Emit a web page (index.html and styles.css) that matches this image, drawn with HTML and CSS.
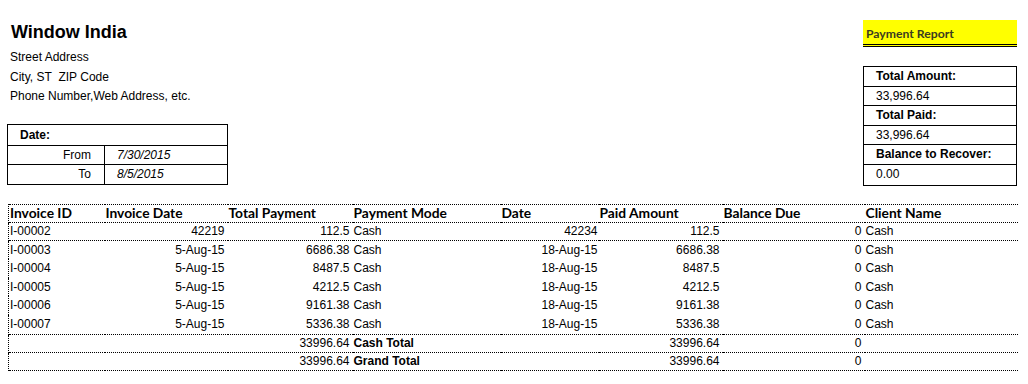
FILE: index.html
```html
<!DOCTYPE html>
<html>
<head>
<meta charset="utf-8">
<title>Payment Report</title>
<link rel="stylesheet" href="styles.css">
</head>
<body>
<div class="page">
  <div class="top">
    <div class="left">
      <div class="company">
        <div class="title">Window India</div>
        <div class="addr">Street Address</div>
        <div class="addr">City, ST&nbsp; ZIP Code</div>
        <div class="addr">Phone Number,Web Address, etc.</div>
      </div>
      <div class="datebox">
        <div class="date-head">Date:</div>
        <div class="date-row"><span class="dl">From</span><span class="dv">7/30/2015</span></div>
        <div class="date-row last"><span class="dl">To</span><span class="dv">8/5/2015</span></div>
      </div>
    </div>
    <div class="right">
      <div class="report-title">Payment Report</div>
      <div class="totals">
        <div class="t-row lbl">Total Amount:</div>
        <div class="t-row">33,996.64</div>
        <div class="t-row lbl">Total Paid:</div>
        <div class="t-row">33,996.64</div>
        <div class="t-row lbl">Balance to Recover:</div>
        <div class="t-row last">0.00</div>
      </div>
    </div>
  </div>

  <table class="report">
    <colgroup>
      <col class="c1"><col class="c2"><col class="c3"><col class="c4">
      <col class="c5"><col class="c6"><col class="c7"><col class="c8">
    </colgroup>
    <thead>
      <tr class="head lined">
        <th>Invoice ID</th><th>Invoice Date</th><th>Total Payment</th><th>Payment Mode</th>
        <th>Date</th><th>Paid Amount</th><th>Balance Due</th><th>Client Name</th>
      </tr>
    </thead>
    <tbody>
      <tr class="lined">
        <td>I-00002</td><td class="r">42219</td><td class="r">112.5</td><td>Cash</td>
        <td class="r d">42234</td><td class="r">112.5</td><td class="r">0</td><td>Cash</td>
      </tr>
      <tr class="mid">
        <td>I-00003</td><td class="r">5-Aug-15</td><td class="r">6686.38</td><td>Cash</td>
        <td class="r d">18-Aug-15</td><td class="r">6686.38</td><td class="r">0</td><td>Cash</td>
      </tr>
      <tr class="mid">
        <td>I-00004</td><td class="r">5-Aug-15</td><td class="r">8487.5</td><td>Cash</td>
        <td class="r d">18-Aug-15</td><td class="r">8487.5</td><td class="r">0</td><td>Cash</td>
      </tr>
      <tr class="mid">
        <td>I-00005</td><td class="r">5-Aug-15</td><td class="r">4212.5</td><td>Cash</td>
        <td class="r d">18-Aug-15</td><td class="r">4212.5</td><td class="r">0</td><td>Cash</td>
      </tr>
      <tr class="mid">
        <td>I-00006</td><td class="r">5-Aug-15</td><td class="r">9161.38</td><td>Cash</td>
        <td class="r d">18-Aug-15</td><td class="r">9161.38</td><td class="r">0</td><td>Cash</td>
      </tr>
      <tr class="mid lined">
        <td>I-00007</td><td class="r">5-Aug-15</td><td class="r">5336.38</td><td>Cash</td>
        <td class="r d">18-Aug-15</td><td class="r">5336.38</td><td class="r">0</td><td>Cash</td>
      </tr>
      <tr class="lined">
        <td></td><td></td><td class="r">33996.64</td><td class="b">Cash Total</td>
        <td></td><td class="r">33996.64</td><td class="r">0</td><td></td>
      </tr>
      <tr class="lined">
        <td></td><td></td><td class="r">33996.64</td><td class="b">Grand Total</td>
        <td></td><td class="r">33996.64</td><td class="r">0</td><td></td>
      </tr>
    </tbody>
  </table>
</div>
</body>
</html>
```

FILE: styles.css
```css
* { box-sizing: border-box; }

body {
  margin: 0;
  background: #fff;
  color: #000;
  font-family: "Liberation Sans", Arial, sans-serif;
  font-size: 12px;
}

.page {
  width: 1028px;
}

.top {
  display: flex;
  justify-content: space-between;
  align-items: flex-start;
  padding: 20px 11px 0 7px;
}

.left {
  width: 221px;
  padding-top: 2px;
}

.company {
  padding-left: 3px;
}

.title {
  font-size: 18px;
  font-weight: bold;
  line-height: 20px;
  padding-left: 1px;
  margin-bottom: 6px;
}

.addr {
  line-height: 19.5px;
  white-space: nowrap;
}

.datebox {
  margin-top: 17.5px;
  border: 1px solid #000;
  width: 221px;
}

.date-head {
  height: 21px;
  line-height: 20px;
  padding-left: 12px;
  font-weight: bold;
  border-bottom: 1px solid #000;
}

.date-row {
  display: flex;
  height: 19px;
  line-height: 18px;
  border-bottom: 1px solid #000;
}

.date-row.last {
  border-bottom: none;
}

.dl {
  width: 97px;
  text-align: right;
  padding-right: 13px;
  border-right: 1px solid #000;
}

.dv {
  padding-left: 12px;
  font-style: italic;
}

.right {
  width: 154px;
}

.report-title {
  background: #ffff00;
  height: 27px;
  line-height: 27px;
  padding-left: 3px;
  font-family: Lato, "Open Sans", sans-serif;
  font-weight: bold;
  font-size: 12.2px;
  color: #3b3b20;
  border-bottom: 3px double #000;
}

.totals {
  margin-top: 19px;
  border: 1px solid #000;
}

.t-row {
  height: 19.6px;
  line-height: 19px;
  padding-left: 12px;
  border-bottom: 1px solid #000;
}

.t-row.last {
  border-bottom: none;
}

.t-row.lbl {
  font-weight: bold;
}

.report {
  margin: 18px 0 0 8px;
  border-collapse: collapse;
  table-layout: fixed;
  width: 1009px;
}

.c1 { width: 96px; }
.c2 { width: 123px; }
.c3 { width: 125px; }
.c4 { width: 148px; }
.c5 { width: 98px; }
.c6 { width: 124px; }
.c7 { width: 142px; }
.c8 { width: 153px; }

.report th,
.report td {
  padding: 0 3px 0 1px;
  height: 17px;
  line-height: 17px;
  white-space: nowrap;
  overflow: hidden;
  text-align: left;
  font-weight: normal;
}

.report thead tr {
  border-top: 1px dotted #000;
}

.report th {
  font-family: Lato, "Open Sans", sans-serif;
  font-weight: bold;
  font-size: 13.8px;
  line-height: 15px;
  padding-bottom: 2px;
}

.report tr.lined {
  border-bottom: 1px dotted #000;
}

.report tr.mid td {
  height: 18.6px;
  line-height: 18.6px;
}

.report th:first-child,
.report td:first-child {
  border-left: 1px dotted #000;
  padding-left: 1px;
}

.report td.r {
  text-align: right;
}

.report td.d {
  padding-right: 1px;
}

.report td.b {
  font-weight: bold;
}
```
